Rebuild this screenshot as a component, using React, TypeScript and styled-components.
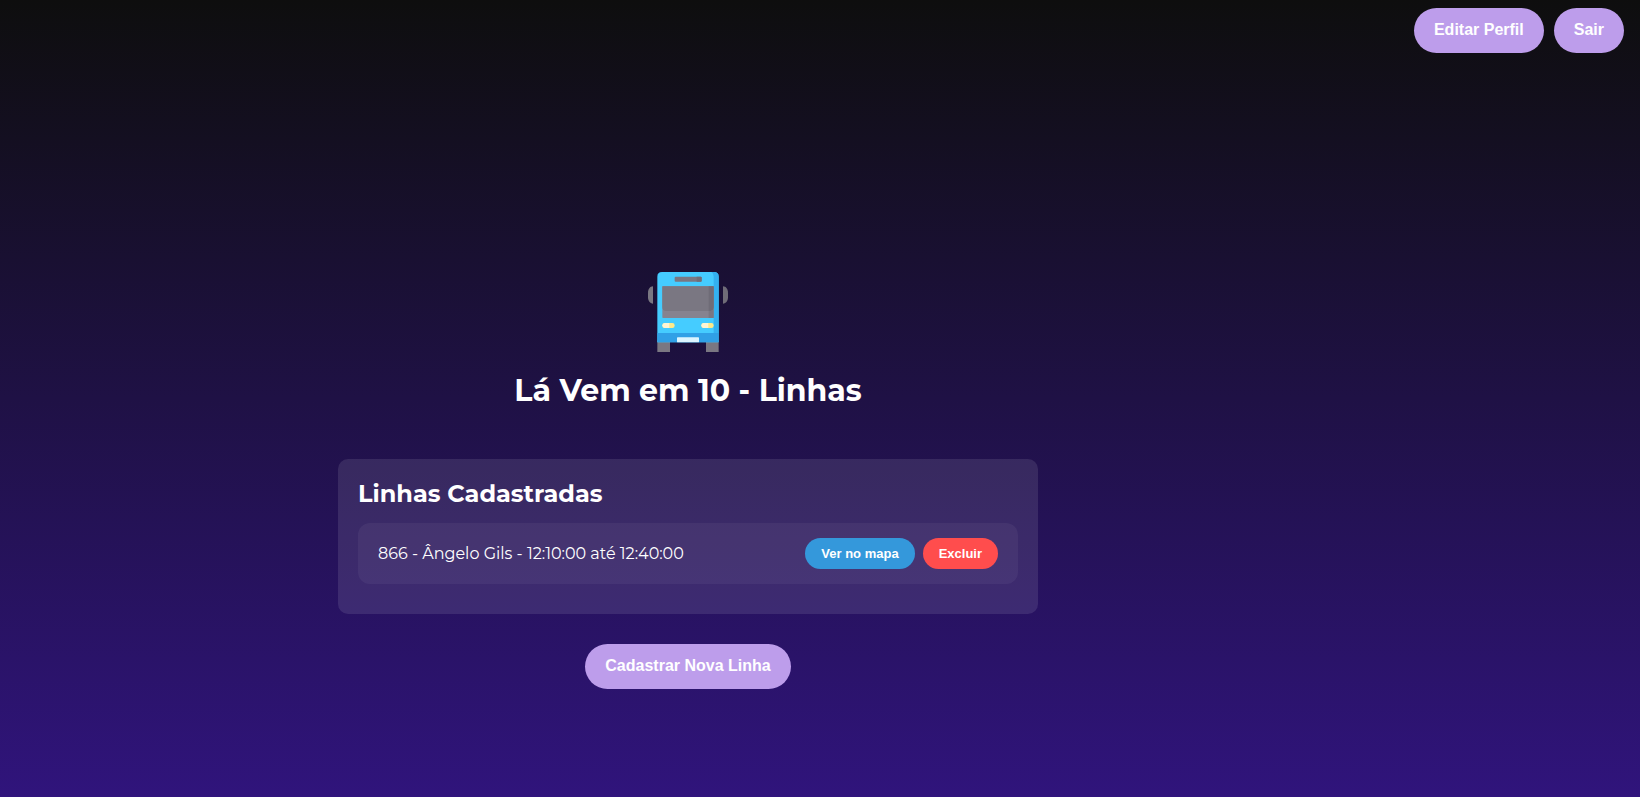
import React from "react";
import styled, { createGlobalStyle, css } from "styled-components";

const GlobalStyle = createGlobalStyle`
  * { box-sizing: border-box; }
  body {
    margin: 0;
    color: #fff;
    font-family: Montserrat, Inter, sans-serif;
  }
`;

const Page = styled.div`
  display: flex;
  align-items: flex-start;
  min-height: 100vh;
  background: linear-gradient(to bottom, #0e0e0e, #30147c);
`;

const Main = styled.main`
  flex: 1;
  display: flex;
  flex-direction: column;
  align-items: center;
  padding: 272px 20px 40px;
`;

const AccountBar = styled.nav`
  display: flex;
  justify-content: flex-end;
  gap: 10px;
  flex: 0 0 264px;
  padding: 8px 16px;
`;

const PrimaryButton = styled.button`
  height: 45px;
  padding: 0 20px 1px;
  border: none;
  border-radius: 25px;
  background: #bd9deb;
  color: #fff;
  font: bold 16px "Liberation Sans", Arial, sans-serif;
  white-space: nowrap;
  cursor: pointer;
`;

const Logo = styled.svg`
  display: block;
  width: 80px;
  height: 80px;
`;

const Title = styled.h1`
  margin: 20px 0 50px;
  font-size: 30px;
  line-height: 37px;
  font-weight: 700;
`;

const Card = styled.section`
  width: 100%;
  max-width: 700px;
  margin-bottom: 30px;
  padding: 20px 20px 30px;
  border-radius: 10px;
  background: rgba(255, 255, 255, 0.1);
`;

const CardTitle = styled.h2`
  margin: 0 0 14px;
  font-size: 24px;
  line-height: 30px;
  font-weight: 700;
`;

const LineList = styled.ul`
  margin: 0;
  padding: 0;
  list-style: none;
`;

const LineItem = styled.li`
  display: flex;
  align-items: center;
  justify-content: space-between;
  padding: 15px 20px;
  border-radius: 12px;
  background: rgba(255, 255, 255, 0.05);
  font-size: 16px;
  line-height: 20px;
`;

const Actions = styled.div`
  display: flex;
  gap: 8px;
`;

const tones = {
  map: css`background: #3498db;`,
  danger: css`background: #ff4d4d;`,
};

const SmallButton = styled.button<{ $tone: keyof typeof tones }>`
  height: 31px;
  padding: 0 16px;
  border: none;
  border-radius: 20px;
  color: #fff;
  font: bold 13px "Liberation Sans", Arial, sans-serif;
  white-space: nowrap;
  cursor: pointer;
  ${({ $tone }) => tones[$tone]}
`;

function BusLogo() {
  return (
    <Logo viewBox="0 0 240 240" role="img" aria-label="Ônibus">
      <path d="M15 43v52C6 95 0 86 0 76V62C0 52 6 43 15 43Z" fill="#7a7782" />
      <path d="M225 43v52c9 0 15-9 15-19V62c0-10-6-19-15-19Z" fill="#6f6c77" />
      <path d="M28 205h38v35H28zM174 205h38v35h-38z" fill="#7a7782" />
      <path d="M42 0h156q14 0 14 14v197H28V14Q28 0 42 0Z" fill="#45ccff" />
      <path d="M190 0h8q14 0 14 14v169h-15V14Q197 4 190 0Z" fill="#34b1f0" />
      <path d="M28 183h184v28H28z" fill="#30a0e6" />
      <rect x="80" y="14" width="81" height="15" rx="3" fill="#7a7782" />
      <path d="M146 14h12q3 0 3 3v9q0 3-3 3h-12Z" fill="#706d78" />
      <rect x="43" y="43" width="154" height="95" rx="2" fill="#868390" />
      <path d="M43 43h154v62q0 12-12 12H55q-12 0-12-12Z" fill="#7a7782" />
      <path d="M182 43h15v62q0 10-10 12h-5Z" fill="#6f6c77" />
      <path d="M182 117h5q7-1 10-7v28h-15Z" fill="#7a7782" />
      <rect x="43" y="153" width="37" height="15" rx="7" fill="#ffea8a" />
      <path d="M50 153h14v15H50q-7-1-7-7.500t7-7.500Z" fill="#fff5d5" />
      <rect x="160" y="153" width="37" height="15" rx="7" fill="#ffea8a" />
      <path d="M167 153h14v15h-14q-7-1-7-7.500t7-7.500Z" fill="#fff5d5" />
      <rect x="87" y="196" width="66" height="15" rx="2" fill="#dcf5ff" />
    </Logo>
  );
}

const lines = [
  { id: 866, name: "Ângelo Gils", start: "12:10:00", end: "12:40:00" },
];

export default function App() {
  return (
    <>
      <GlobalStyle />
      <Page>
        <Main>
          <BusLogo />
          <Title>Lá Vem em 10 - Linhas</Title>
          <Card>
            <CardTitle>Linhas Cadastradas</CardTitle>
            <LineList>
              {lines.map((line) => (
                <LineItem key={line.id}>
                  <span>{`${line.id} - ${line.name} - ${line.start} até ${line.end}`}</span>
                  <Actions>
                    <SmallButton type="button" $tone="map">Ver no mapa</SmallButton>
                    <SmallButton type="button" $tone="danger">Excluir</SmallButton>
                  </Actions>
                </LineItem>
              ))}
            </LineList>
          </Card>
          <PrimaryButton type="button">Cadastrar Nova Linha</PrimaryButton>
        </Main>
        <AccountBar>
          <PrimaryButton type="button">Editar Perfil</PrimaryButton>
          <PrimaryButton type="button">Sair</PrimaryButton>
        </AccountBar>
      </Page>
    </>
  );
}
